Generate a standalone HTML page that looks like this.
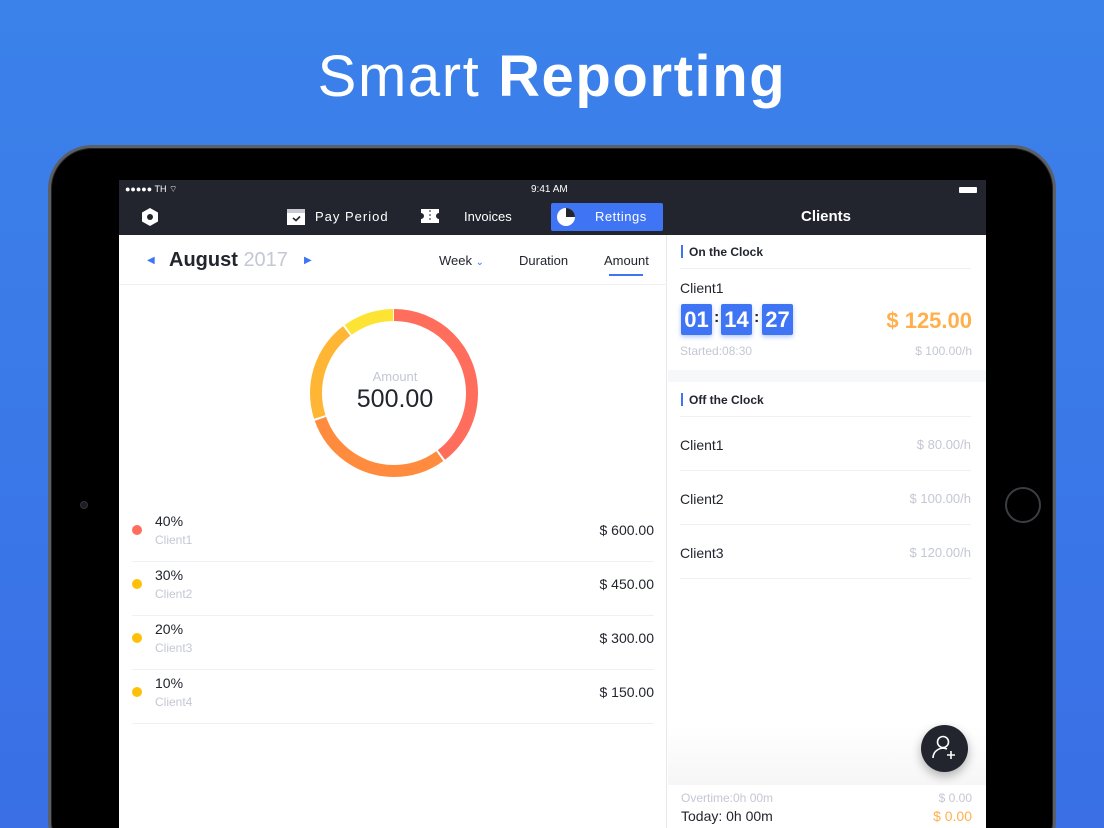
<!DOCTYPE html><html><head><meta charset="utf-8"><style>
*{margin:0;padding:0;box-sizing:border-box}
html{width:1104px;height:828px;overflow:hidden}
body{width:1104px;height:828px;overflow:hidden;background:linear-gradient(180deg,#3b82ea,#3a6fe6);font-family:"Liberation Sans",sans-serif;position:relative}
.a{position:absolute}
h1{position:absolute;top:43px;left:0;width:1104px;text-align:center;color:#fff;font-size:58px;font-weight:400;letter-spacing:1.6px}
h1 b{font-weight:700}
.dev{left:48px;top:145px;width:1008px;height:720px;background:#000;border-radius:44px;border:3px solid #5b5f66;box-shadow:inset 0 0 0 1px #222}
.scr{left:119px;top:180px;width:867px;height:660px;background:#fff;overflow:hidden}
.dk{background:#22252e;color:#fff}
.g{color:#c4c7d4}
.row{position:absolute;left:13px;width:522px;height:54px;border-bottom:1px solid #eef0f3}
.dot{position:absolute;left:0;top:17px;width:10px;height:10px;border-radius:50%}
.pct{position:absolute;left:23px;top:5px;font-size:14px;color:#22252e}
.cl{position:absolute;left:23px;top:25px;font-size:12px;color:#c4c7d4}
.amt{position:absolute;right:0;top:14px;font-size:14px;color:#22252e}
.tb{position:absolute;top:69px;width:31px;height:31px;background:#3f74f4;color:#fff;font-weight:700;font-size:22px;text-align:center;line-height:31px;border-radius:2px;box-shadow:0 2px 5px rgba(63,116,244,.4)}
.cr{position:absolute;left:12px;width:291px;height:54px;border-bottom:1px solid #eef0f3;font-size:14px;color:#22252e}
.cr span{position:absolute;right:0;top:20px;color:#c4c7d4;font-size:13px}
.cr b{font-weight:400;position:absolute;left:0;top:20px}
</style></head><body>
<h1>Smart <b>Reporting</b></h1>
<div class="a dev"></div>
<div class="a" style="left:1005px;top:487px;width:36px;height:36px;border-radius:50%;border:2px solid #3a3d42"></div>
<div class="a" style="left:80px;top:501px;width:8px;height:8px;border-radius:50%;background:#1b1e26;border:1px solid #333"></div>
<div class="a scr">
 <div class="a dk" style="left:0;top:0;width:867px;height:55px"></div>
 <div class="a" style="left:6px;top:4px;color:#fff;font-size:9px">●●●●● TH ︎⌔</div>
 <div class="a" style="left:412px;top:4px;color:#fff;font-size:10px">9:41 AM</div>
 <div class="a" style="left:840px;top:7px;width:18px;height:6px;background:#fff;border-radius:1px"></div>
 <svg class="a" style="left:22px;top:27px" width="18" height="20" viewBox="0 0 18 20"><path d="M9 1L17 5.5V14.5L9 19L1 14.5V5.5Z" fill="#fff"/><circle cx="9" cy="10" r="3" fill="#22252e"/></svg>
 <svg class="a" style="left:168px;top:27px" width="18" height="18"><rect x="0" y="2" width="18" height="16" fill="#fff"/><rect x="0" y="2" width="18" height="4" fill="#c8cad2"/><path d="M6 11l3 2.5 4-4" stroke="#22252e" stroke-width="1.6" fill="none"/></svg>
 <div class="a" style="left:196px;top:29px;color:#fff;font-size:13px;letter-spacing:1px">Pay Period</div>
 <svg class="a" style="left:302px;top:29px" width="18" height="14"><path d="M0 0h18v4a3 3 0 0 0 0 6v4H0v-4a3 3 0 0 0 0-6z" fill="#fff"/><path d="M9 1v12" stroke="#22252e" stroke-dasharray="2 2"/></svg>
 <div class="a" style="left:345px;top:29px;color:#fff;font-size:13px">Invoices</div>
 <div class="a" style="left:432px;top:23px;width:112px;height:28px;background:#3f74f4;border-radius:2px"></div>
 <svg class="a" style="left:437px;top:27px" width="20" height="20"><circle cx="10" cy="10" r="9" fill="#fff"/><path d="M10 10V1a9 9 0 0 1 9 9z" fill="#22252e"/></svg>
 <div class="a" style="left:476px;top:29px;color:#fff;font-size:13px;letter-spacing:.5px">Rettings</div>
 <div class="a" style="left:682px;top:28px;color:#fff;font-size:15px;font-weight:700">Clients</div>
 <div class="a" style="left:0;top:55px;width:548px;height:605px;border-right:1px solid #e6e8ec"></div>
 <div class="a" style="left:28px;top:75px;color:#3f74f4;font-size:10px">◀</div>
 <div class="a" style="left:50px;top:69px;font-size:20px;font-weight:700;color:#22252e">August <span style="font-weight:400;color:#c4c7d4">2017</span></div>
 <div class="a" style="left:185px;top:75px;color:#3f74f4;font-size:10px">▶</div>
 <div class="a" style="left:320px;top:73px;font-size:13px;color:#22252e">Week <span style="color:#3f74f4;font-size:10px">⌄</span></div>
 <div class="a" style="left:400px;top:73px;font-size:13px;color:#22252e">Duration</div>
 <div class="a" style="left:485px;top:73px;font-size:13px;color:#22252e">Amount</div>
 <div class="a" style="left:490px;top:94px;width:34px;height:2px;background:#3f74f4"></div>
 <div class="a" style="left:0;top:104px;width:548px;height:1px;background:#eef0f3"></div>
 <svg class="a" style="left:185px;top:123px" width="180" height="180" viewBox="0 0 180 180"><g transform="rotate(-90 90 90)" fill="none" stroke-width="12">
 <circle cx="90" cy="90" r="78" stroke="#ff6d5c" stroke-dasharray="194 296"/>
 <circle cx="90" cy="90" r="78" stroke="#ff8c3e" stroke-dasharray="145 345" stroke-dashoffset="-196"/>
 <circle cx="90" cy="90" r="78" stroke="#ffb635" stroke-dasharray="96 394" stroke-dashoffset="-343"/>
 <circle cx="90" cy="90" r="78" stroke="#fde434" stroke-dasharray="48 442" stroke-dashoffset="-441"/></g></svg>
 <div class="a" style="left:185px;top:189px;width:182px;text-align:center;font-size:13px;color:#c4c7d4">Amount</div>
 <div class="a" style="left:185px;top:205px;width:182px;text-align:center;font-size:25px;color:#22252e">500.00</div>
 <div class="row" style="top:328px"><i class="dot" style="background:#ff6d5c"></i><span class="pct">40%</span><span class="cl">Client1</span><span class="amt">$ 600.00</span></div>
 <div class="row" style="top:382px"><i class="dot" style="background:#ffc107"></i><span class="pct">30%</span><span class="cl">Client2</span><span class="amt">$ 450.00</span></div>
 <div class="row" style="top:436px"><i class="dot" style="background:#ffc107"></i><span class="pct">20%</span><span class="cl">Client3</span><span class="amt">$ 300.00</span></div>
 <div class="row" style="top:490px"><i class="dot" style="background:#ffc107"></i><span class="pct">10%</span><span class="cl">Client4</span><span class="amt">$ 150.00</span></div>
 <div class="a" style="left:549px;top:55px;width:318px;height:605px">
  <div class="a" style="left:13px;top:10px;width:2px;height:13px;background:#3f74f4"></div>
  <div class="a" style="left:21px;top:10px;font-size:12px;font-weight:700;color:#22252e">On the Clock</div>
  <div class="a" style="left:12px;top:33px;width:291px;height:1px;background:#eef0f3"></div>
  <div class="a" style="left:12px;top:45px;font-size:14px;color:#22252e">Client1</div>
  <div class="tb" style="left:13px">01</div><div class="a" style="left:46px;top:74px;font-weight:700;color:#22252e">:</div>
  <div class="tb" style="left:53px">14</div><div class="a" style="left:86px;top:74px;font-weight:700;color:#22252e">:</div>
  <div class="tb" style="left:94px">27</div>
  <div class="a" style="right:14px;top:73px;font-size:22px;font-weight:700;color:#ffb04c">$ 125.00</div>
  <div class="a g" style="left:12px;top:109px;font-size:12px">Started:08:30</div>
  <div class="a g" style="right:14px;top:109px;font-size:12px">$ 100.00/h</div>
  <div class="a" style="left:0;top:135px;width:318px;height:12px;background:#f6f7f9"></div>
  <div class="a" style="left:13px;top:158px;width:2px;height:13px;background:#3f74f4"></div>
  <div class="a" style="left:21px;top:158px;font-size:12px;font-weight:700;color:#22252e">Off the Clock</div>
  <div class="a" style="left:12px;top:181px;width:291px;height:1px;background:#eef0f3"></div>
  <div class="cr" style="top:182px"><b>Client1</b><span>$ 80.00/h</span></div>
  <div class="cr" style="top:236px"><b>Client2</b><span>$ 100.00/h</span></div>
  <div class="cr" style="top:290px"><b>Client3</b><span>$ 120.00/h</span></div>
  <div class="a" style="left:0;top:490px;width:318px;height:60px;background:linear-gradient(#fff,#f6f6f7)"></div>
  <div class="a" style="left:253px;top:490px;width:47px;height:47px;border-radius:50%;background:#22252e;box-shadow:0 4px 10px rgba(0,0,0,.3)"></div>
  <svg class="a" style="left:262px;top:498px" width="30" height="30"><circle cx="13" cy="9" r="5.5" stroke="#fff" stroke-width="1.6" fill="none"/><path d="M3 25a10 10 0 0 1 14-9M21 18v8M17 22h8" stroke="#fff" stroke-width="1.6" fill="none"/></svg>
  <div class="a g" style="left:13px;top:556px;font-size:12px">Overtime:0h 00m</div>
  <div class="a g" style="right:14px;top:556px;font-size:12px">$ 0.00</div>
  <div class="a" style="left:13px;top:573px;font-size:14px;color:#22252e">Today: 0h 00m</div>
  <div class="a" style="right:14px;top:573px;font-size:14px;color:#ffb04c">$ 0.00</div>
 </div>
</div>
</body></html>
